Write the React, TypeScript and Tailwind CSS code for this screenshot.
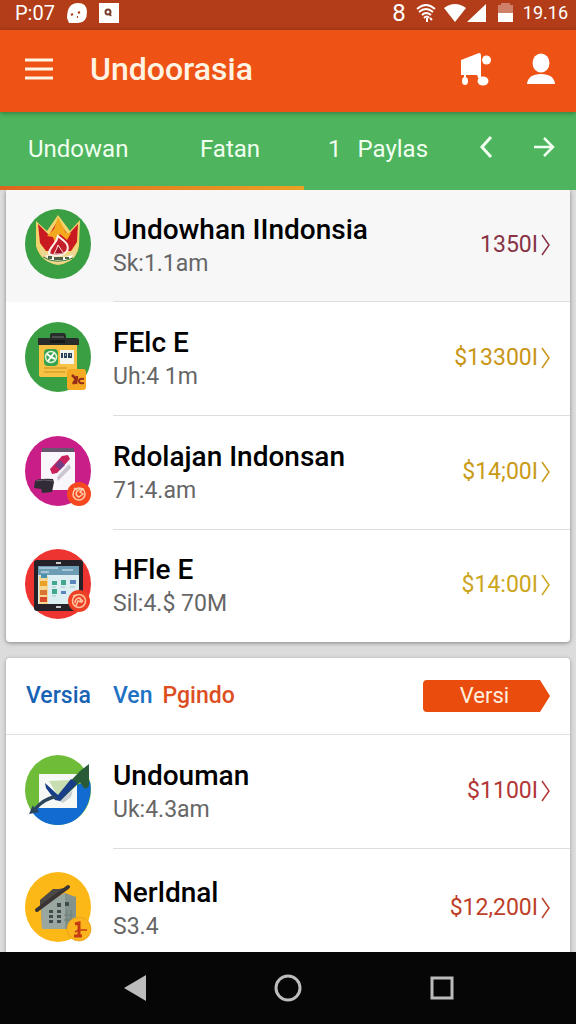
import type { ReactNode } from 'react';

type Entry = {
  title: string;
  detail: string;
  price: string;
  priceColor: string;
  rowClass: string;
  icon: ReactNode;
};

const GarudaIcon = () => (
  <svg viewBox="0 0 68 70" className="h-[70px] w-[68px]" aria-hidden="true">
    <ellipse cx="34" cy="35" rx="33" ry="35" fill="#3a9e43" />
    <path d="M12 12 23 22 34 6 46 22 56 11 55 37Q53 53 34 56 16 53 12 37Z" fill="#f3d36b" />
    <path d="M14 15 25 26 34 11 44 26 54 15 53 33 47 42 22 42 16 34Z" fill="#c91921" />
    <path d="M23 27 30 20 34 8 42 24 47 24 43 31 36 25 31 34 29 28Z" fill="#f4a81d" />
    <path d="M16 36Q20 44 28 46L34 28 42 46Q49 44 54 35L51 47Q47 53 34 55 20 53 17 46Z" fill="#eed795" />
    <path d="M25 45C25 37 32 37 34 27 40 32 46 35 43 42 39 47 31 48 25 45Z" fill="#c51f2b" stroke="#fff0ea" strokeWidth="2" />
    <path d="M30 45Q33 40 34 36 38 42 40 45Z" fill="#a31224" stroke="#fbe7df" />
    <path d="M22 46Q34 51 49 46L46 50Q35 53 24 50Z" fill="#fff" />
    <path d="M24 47h4v3h-4ZM30 48h9v3h-9ZM41 48h4v2h-4Z" fill="#4f6047" />
    <path d="M19 48Q32 56 49 49" fill="none" stroke="#3c8140" />
  </svg>
);

const ClipboardIcon = () => (
  <svg viewBox="0 0 68 70" className="h-[70px] w-[68px]" aria-hidden="true">
    <ellipse cx="34" cy="35" rx="33" ry="35" fill="#3a9e43" />
    <path d="M15 20h38v35H17q-2 0-2-2Z" fill="#f8c345" />
    <path d="M14 16h12v-3q0-2 2-2h11q3 0 3 3v2h11q2 0 2 2v5H14Z" fill="#282d2c" />
    <path d="M28 16h12v-2H28Z" fill="#4a504f" />
    <path d="M26 18h15v3H26Z" fill="#151a19" />
    <rect x="20" y="27" width="14" height="17" rx="4" fill="#36a34e" />
    <circle cx="27" cy="35" r="5.5" fill="none" stroke="#e3f3d5" strokeWidth="1.5" />
    <path d="m27 35-4-3M27 35l3-4M27 35l-3 4M27 35l4 2" stroke="#fff" strokeWidth="2" />
    <rect x="36" y="28" width="14" height="14" fill="#f2f6ef" />
    <path d="M37 31h2v5h-2ZM40 31h3v5h-3ZM44 31h4v5h-4Z" fill="#28445b" />
    <path d="M41 33h1M46 33h1" stroke="#fff" />
    <path d="M20 46h23M20 50h21" stroke="#ca8c20" />
    <rect x="43" y="47" width="19" height="21" rx="3" fill="#f6aa24" />
    <path d="m48 53 4 4-3 5M53 54l-1 8" fill="none" stroke="#962d18" strokeWidth="2.5" />
    <path d="M60 57q-5-1-5 2t5 2" fill="none" stroke="#962d18" strokeWidth="2" />
  </svg>
);

const NotebookIcon = () => (
  <svg viewBox="0 0 68 70" className="h-[70px] w-[68px]" aria-hidden="true">
    <ellipse cx="34" cy="35" rx="33" ry="35" fill="#c91d87" />
    <path d="M18 12h32v6H18Z" fill="#68566e" />
    <path d="M17 16h34v38H17Z" fill="#f8f6fa" />
    <path d="m33 41 12-13 2 4-13 13Z" fill="#c9c6d2" />
    <path d="m26 33 12-13 6-1 2 4-13 14-5 1Z" fill="#c9215b" />
    <path d="m31 29 5-5 5 5-5 5Z" fill="#753c83" />
    <path d="M11 45q3-3 18-2l1 3-2 10-10 1-1-4-7-1Z" fill="#302b35" />
    <path d="M12 45q7-2 17 0" stroke="#69616b" fill="none" />
    <circle cx="55" cy="58" r="12" fill="#f54820" />
    <circle cx="55" cy="58" r="6" fill="none" stroke="#ffd0ad" strokeWidth="1.5" />
    <path d="M52 57q3-5 7-4l-3 3 3 2-4 3q-3-1-3-4M50 52l3 2" fill="none" stroke="#ffd0ad" strokeWidth="1.5" />
  </svg>
);

const TabletIcon = () => (
  <svg viewBox="0 0 68 70" className="h-[70px] w-[68px]" aria-hidden="true">
    <ellipse cx="34" cy="35" rx="33" ry="35" fill="#ee3430" />
    <rect x="10" y="11" width="49" height="51" rx="3" fill="#242129" />
    <path d="M14 17h41v38H14Z" fill="#dceef1" />
    <path d="M14 17h41v9H14Z" fill="#6d9cb5" />
    <path d="M15 19h19M38 21h11M17 23h8" stroke="#b8d3df" strokeWidth="1.5" />
    <path d="M15 27h9v28h-9Z" fill="#f6d693" />
    <path d="M17 25h6v4h-6Z" fill="#4892af" />
    <path d="M16 32h7v5h-7Z" fill="#e8a028" />
    <path d="M16 41h7v5h-7Z" fill="#d87534" />
    <path d="M16 48h7v5h-7Z" fill="#d84a2d" />
    <path d="M28 32h5v4h-5ZM37 31h5v5h-5ZM28 40h5v5h-5Z" fill="#41a88b" />
    <path d="M46 31h6v4h-6ZM37 42h5v3h-5Z" fill="#5a85bd" />
    <path d="M28 38h4M37 38h4M46 38h5M28 47h4" stroke="#a1c5cb" />
    <path d="M32 14h5M32 58h5" stroke="#fff" strokeWidth="1.5" />
    <circle cx="55" cy="52" r="11" fill="#ed4024" />
    <circle cx="55" cy="52" r="6.5" fill="none" stroke="#ffc49f" strokeWidth="1.5" />
    <path d="M51 54q0-5 5-5l1 4-3-1-2 5M57 50l2 3M49 47l4-1" fill="none" stroke="#ffc49f" strokeWidth="1.5" />
  </svg>
);

const CheckIcon = () => (
  <svg viewBox="0 0 68 70" className="h-[70px] w-[68px]" aria-hidden="true">
    <ellipse cx="34" cy="35" rx="33" ry="35" fill="#6ebc37" />
    <path d="M6.9 55 31 36 65.9 26C70 45 58 70 34 70 22 70 12 64 6.9 55Z" fill="#116bd0" />
    <path d="M15 19h38v34H15Z" fill="#f5f8f4" />
    <path d="m25 26 24-1-15 16Z" fill="#c8deb0" />
    <path d="m35 46 14-11-2 7-8 6Z" fill="#c8ced3" />
    <path d="M35 45Q47 21 65 9v21q-1 4-5 3l-4-6L36 46Z" fill="#295b39" />
    <path d="m21 28 13 12L47 24l6 4-17 18-5-1-9-12Z" fill="#173d88" />
    <path d="M30 40Q18 43 10 53l-1-3-4 9 10-2-2-3q9-9 20-11Z" fill="#29445b" />
  </svg>
);

const BuildingIcon = () => (
  <svg viewBox="0 0 68 70" className="h-[70px] w-[68px]" aria-hidden="true">
    <ellipse cx="34" cy="35" rx="33" ry="35" fill="#fcb817" />
    <path d="m17 34 24-13 11 4v32H18Z" fill="#84938e" />
    <path d="m17 34 24-13v36H18Z" fill="#9aa6a0" />
    <path d="m16 28 13-11h6l5-1-24 20Z" fill="#4b4845" />
    <path d="M13 38 44 15" stroke="#393433" strokeWidth="4" strokeLinecap="round" />
    <path d="M33 31h4v4h-4ZM41 30h4v4h-4ZM25 38h4v3h-4ZM33 38h4v3h-4ZM25 43h4v3h-4ZM33 43h4v3h-4ZM25 48h4v3h-4ZM33 48h4v3h-4Z" fill="#424b4b" />
    <path d="M43 38v13M47 38v13M40 43h9M40 48h9" stroke="#6e7f79" />
    <circle cx="55" cy="57" r="12" fill="#fbb41b" stroke="#e29d18" strokeWidth="0.7" />
    <path d="m51 52 4-1v13M50 64h8" fill="none" stroke="#c33c16" strokeWidth="3" />
    <path d="M55 58h8M51 60l4-2" fill="none" stroke="#c33c16" strokeWidth="1.5" />
  </svg>
);

const services: Entry[] = [
  { title: 'Undowhan IIndonsia', detail: 'Sk:1.1am', price: '1350I', priceColor: 'text-[#873345]', rowClass: 'min-h-[112px] bg-[#f7f7f8]', icon: <GarudaIcon /> },
  { title: 'FElc E', detail: 'Uh:4 1m', price: '$13300I', priceColor: 'text-[#c99516]', rowClass: 'min-h-[114px]', icon: <ClipboardIcon /> },
  { title: 'Rdolajan Indonsan', detail: '71:4.am', price: '$14;00I', priceColor: 'text-[#c99a16]', rowClass: 'min-h-[114px]', icon: <NotebookIcon /> },
  { title: 'HFle E', detail: 'Sil:4.$ 70M', price: '$14:00I', priceColor: 'text-[#cba51b]', rowClass: 'min-h-[112px]', icon: <TabletIcon /> },
];

const versions: Entry[] = [
  { title: 'Undouman', detail: 'Uk:4.3am', price: '$1100I', priceColor: 'text-[#b13636]', rowClass: 'min-h-[114px]', icon: <CheckIcon /> },
  { title: 'Nerldnal', detail: 'S3.4', price: '$12,200I', priceColor: 'text-[#bd4028]', rowClass: 'min-h-[120px]', icon: <BuildingIcon /> },
];

const EntryRow = ({ entry }: { entry: Entry }) => (
  <li className={`group flex ${entry.rowClass}`}>
    <div className="flex w-[107px] shrink-0 items-center pb-1 pl-[18px]">{entry.icon}</div>
    <a
      href="#"
      className="flex min-w-0 flex-1 items-center justify-between border-b border-[#dedede] pr-5 group-last:border-transparent"
    >
      <span className="flex flex-col">
        <span className="text-[28px] leading-9 font-medium text-black">{entry.title}</span>
        <span className="text-[23px] leading-8 text-[#666]">{entry.detail}</span>
      </span>
      <span className={`flex items-center gap-0.5 pb-0.5 text-[23px] leading-8 ${entry.priceColor}`}>
        {entry.price}
        <svg viewBox="0 0 10 24" className="h-6 w-2.5" fill="none" stroke="currentColor" strokeWidth="1.5" aria-hidden="true">
          <path d="M2 2 9 12 2 22" />
        </svg>
      </span>
    </a>
  </li>
);

const StatusBar = () => (
  <div className="flex h-[30px] shrink-0 items-center justify-between bg-[#b23d18] pr-2 pb-1 pl-[15px] text-white">
    <div className="flex items-center gap-3">
      <span className="w-10 text-xl leading-6">P:07</span>
      <svg viewBox="0 0 20 20" className="h-5 w-5" aria-hidden="true">
        <path d="M11 0q9 0 9 9 0 11-9 11H2l-2-5Q0 0 11 0Z" fill="#fff" />
        <path d="M4 12l2-1M11 10l2-1M10 14h1" stroke="#b23d18" strokeWidth="2" />
      </svg>
      <svg viewBox="0 0 20 20" className="h-5 w-5" aria-hidden="true">
        <path d="M0 0h20v20H0Z" fill="#fff" />
        <circle cx="9" cy="9" r="2.5" fill="none" stroke="#79402f" strokeWidth="2" />
        <path d="m10 10 2 3" stroke="#79402f" strokeWidth="2" />
      </svg>
    </div>
    <div className="flex items-center">
      <span className="mr-2.5 text-2xl leading-6">8</span>
      <svg viewBox="0 0 20 20" className="mr-2 h-5 w-5" fill="none" stroke="#fff" strokeWidth="2" aria-hidden="true">
        <path d="M1 6q9-8 18 0M3 9q7-6 14 0M6 12q4-4 9 0M8 15q3-3 5 0M11 15v4M14 15l2 2" />
      </svg>
      <svg viewBox="0 0 44 20" className="mr-2.5 h-5 w-11" fill="#fff" aria-hidden="true">
        <path d="M0 5q11-8 22 0L11 19ZM42 1v18H23Z" />
      </svg>
      <svg viewBox="0 0 15 20" className="mr-2.5 h-5 w-[15px]" aria-hidden="true">
        <path d="M3 0h9v2h3v9H0V2h3Z" fill="#ce8068" />
        <path d="M0 10h15v9H0Z" fill="#fff" />
      </svg>
      <span className="text-lg leading-6">19.16</span>
    </div>
  </div>
);

const AppBar = () => (
  <header className="relative flex h-[82px] shrink-0 items-center bg-[#ee5315] pr-[21px] pb-1 pl-[25px] text-white shadow-[0_1px_5px_rgba(0,0,0,0.35)]">
    <button type="button" aria-label="Menu">
      <svg viewBox="0 0 28 22" className="h-[22px] w-7" fill="none" stroke="#fff3e4" strokeWidth="3" aria-hidden="true">
        <path d="M0 2h28M0 11h28M0 20h28" />
      </svg>
    </button>
    <h1 className="ml-[37px] flex-1 text-[32px] leading-10 font-medium text-[#fff3e4]">Undoorasia</h1>
    <button type="button" aria-label="Cart">
      <svg viewBox="0 0 32 34" className="h-[34px] w-8" fill="#fff" aria-hidden="true">
        <path d="m2 8 18-7q2 0 2 2v20H7v2H5v-2H2Z" />
        <circle cx="27.5" cy="8" r="4.5" />
        <ellipse cx="6" cy="29" rx="3" ry="4" />
        <ellipse cx="24" cy="29" rx="5.5" ry="4.5" />
        <path d="M18 22h4v4h-3Z" />
      </svg>
    </button>
    <button type="button" aria-label="Account" className="ml-9">
      <svg viewBox="0 0 28 32" className="h-8 w-7" fill="#fff" aria-hidden="true">
        <ellipse cx="14" cy="10" rx="8.5" ry="9.5" />
        <path d="M0 31q1-10 14-10t14 10Z" />
      </svg>
    </button>
  </header>
);

const TabBar = () => (
  <nav className="flex h-[78px] shrink-0 flex-col bg-[#4eb45d] text-2xl text-[#f0fff0]">
    <div className="flex flex-1">
      <a href="#" className="flex w-[152px] items-center pl-7">Undowan</a>
      <a href="#" className="flex w-[152px] items-center pl-12">Fatan</a>
      <a href="#" className="flex flex-1 items-center gap-4 pl-6">
        <span>1</span>
        <span>Paylas</span>
      </a>
      <div className="flex items-center gap-10 pr-[21px] pb-1">
        <button type="button" aria-label="Previous">
          <svg viewBox="0 0 14 22" className="h-[22px] w-3.5" fill="none" stroke="currentColor" strokeWidth="3" aria-hidden="true">
            <path d="M12 1 3 11l9 10" />
          </svg>
        </button>
        <button type="button" aria-label="Next">
          <svg viewBox="0 0 22 22" className="h-[22px] w-[22px]" fill="none" stroke="currentColor" strokeWidth="2.5" aria-hidden="true">
            <path d="M1 11h19M11 2l9 9-9 9" />
          </svg>
        </button>
      </div>
    </div>
    <div className="h-1 w-[304px] bg-linear-to-r from-[#dd661d] to-[#eaa124]" />
  </nav>
);

const NavigationBar = () => (
  <footer className="flex h-[72px] shrink-0 items-center justify-center gap-[127px] bg-[#060606]">
    <button type="button" aria-label="Back">
      <svg viewBox="0 0 26 28" className="h-7 w-[26px]" fill="#bcbcbc" aria-hidden="true">
        <path d="M3 14 25 1v26Z" />
      </svg>
    </button>
    <button type="button" aria-label="Home">
      <svg viewBox="0 0 28 28" className="h-7 w-7" fill="none" stroke="#bcbcbc" strokeWidth="3" aria-hidden="true">
        <circle cx="14" cy="14" r="12" />
      </svg>
    </button>
    <button type="button" aria-label="Recent apps">
      <svg viewBox="0 0 26 26" className="h-[26px] w-[26px]" fill="none" stroke="#bcbcbc" strokeWidth="3" aria-hidden="true">
        <path d="M3 3h20v20H3Z" />
      </svg>
    </button>
  </footer>
);

const App = () => {
  return (
    <div className="flex h-screen flex-col overflow-hidden bg-[#dcdcdd] font-['Roboto','Liberation_Sans',sans-serif]">
      <StatusBar />
      <AppBar />
      <TabBar />

      <main className="min-h-0 flex-1 overflow-hidden px-1.5">
        {/* Services */}
        <ul className="rounded-b-sm bg-white shadow-[0_1px_4px_rgba(0,0,0,0.4)]">
          {services.map((entry) => (
            <EntryRow key={entry.title} entry={entry} />
          ))}
        </ul>

        {/* Versions */}
        <section className="mt-4 rounded-sm bg-white shadow-[0_1px_4px_rgba(0,0,0,0.3)]">
          <div className="flex h-[77px] items-center border-b border-[#e2e2e2] pr-5 pl-5 text-[23px] font-medium">
            <a href="#" className="w-[87px] text-[#1762b5]">Versia</a>
            <a href="#" className="text-[#1e72c4]">Ven</a>
            <a href="#" className="ml-2.5 text-[#dc4e1f]">Pgindo</a>
            <button type="button" className="ml-auto flex h-8 w-[127px] text-[22px] leading-8 font-normal text-[#ffeedd]">
              <span className="flex-1 rounded-l-sm bg-[#ea4c0d] pl-1.5">Versi</span>
              <svg viewBox="0 0 10 32" className="h-8 w-2.5" aria-hidden="true">
                <path d="M0 0 10 16 0 32Z" fill="#ea4c0d" />
              </svg>
            </button>
          </div>
          <ul>
            {versions.map((entry) => (
              <EntryRow key={entry.title} entry={entry} />
            ))}
          </ul>
        </section>
      </main>

      <NavigationBar />
    </div>
  );
};

export default App;
